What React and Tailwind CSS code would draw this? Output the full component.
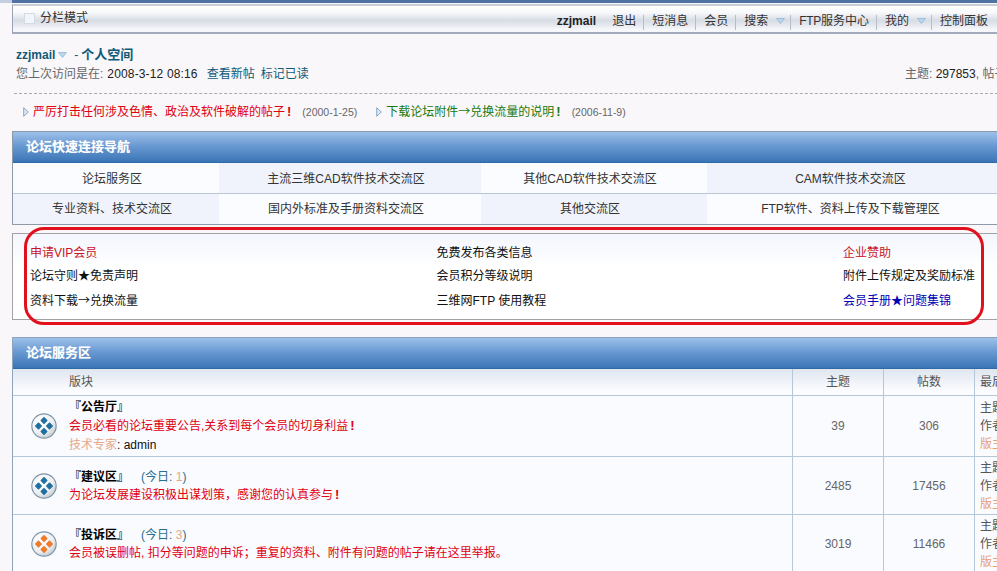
import React from "react";

const F = "font-['Liberation_Sans','Noto_Sans_CJK_SC',sans-serif]";

function Down({ className = "" }) {
  return (
    <svg width="9" height="6" viewBox="0 0 9 6" className={className}>
      <path d="M0.5 0.5 H8.5 L4.5 5.5 Z" fill="#bcd6ec" stroke="#8fb6d8" strokeWidth="0.8" />
    </svg>
  );
}

function Tri() {
  return (
    <svg width="6" height="10" viewBox="0 0 6 10" className="shrink-0">
      <path d="M0.7 0.7 L5.3 5 L0.7 9.3 Z" fill="#dce8f4" stroke="#88a8c8" strokeWidth="1" />
    </svg>
  );
}

function Sym({ children }) {
  return <span className="font-['Noto_Sans_CJK_SC',sans-serif] leading-[0px]">{children}</span>;
}

function Board({ id, color }) {
  const ds = [[12.5, 7.2], [17.8, 12.5], [12.5, 17.8], [7.2, 12.5]];
  return (
    <svg width="26" height="26" viewBox="0 0 25 25" className="shrink-0">
      <defs>
        <radialGradient id={id} cx="0.35" cy="0.3" r="0.8">
          <stop offset="0" stopColor="#ffffff" />
          <stop offset="0.65" stopColor="#eceef0" />
          <stop offset="1" stopColor="#b9c0c6" />
        </radialGradient>
      </defs>
      <circle cx="12.5" cy="12.5" r="11.7" fill={`url(#${id})`} stroke="#7c93a8" strokeWidth="1.1" />
      {ds.map(([x, y], i) => (
        <rect key={i} x={x - 2.6} y={y - 2.6} width="5.2" height="5.2" rx="0.8" fill={color} transform={`rotate(45 ${x} ${y})`} />
      ))}
    </svg>
  );
}

function Bang() {
  return <b className="ml-[2px] font-bold text-[13px] leading-[0px]">!</b>;
}

function Head({ children }) {
  return (
    <div className="h-[31px] pl-[13px] flex items-center text-[13px] font-bold text-white bg-[linear-gradient(to_bottom,#9dc0ea,#6a9ad2_45%,#3b75b6)] border-b border-b-[#2f6aa6] [text-shadow:0_0_1px_#ffffff55]">
      {children}
    </div>
  );
}

function Cell({ children, dark, w, extra = "" }) {
  return (
    <div className={`${w} ${extra} ${dark ? "bg-[#f0f3fb]" : "bg-[#fbfcff]"} pr-[8px] flex items-center justify-center text-[#333]`}>
      {children}
    </div>
  );
}

function NavItem({ children, arrow, last }) {
  return (
    <div className="relative h-full flex items-center pt-[3px]">
      <span className="px-[8px] flex items-center text-[#333] whitespace-nowrap">
        {children}
        {arrow && <Down className="ml-[8px] mr-[-2px]" />}
      </span>
      {!last && <span className="absolute right-0 top-[9px] h-[15px] w-px bg-[#b6bcc8]" />}
    </div>
  );
}

function Forum({ id, color, height, lead, children, topics, posts }) {
  return (
    <div className={`flex ${height} border-t border-t-[#b4c8da]`}>
      <div className={`w-[779px] shrink-0 ${lead} flex items-center`}>
        <div className="w-[56px] shrink-0 flex justify-end pr-[12px]">
          <Board id={id} color={color} />
        </div>
        <div className="flex-1 whitespace-nowrap">{children}</div>
      </div>
      <div className="w-[91px] shrink-0 border-l border-l-[#b4c8da] flex items-center justify-center text-[#666]">{topics}</div>
      <div className="w-[91px] shrink-0 border-l border-l-[#b4c8da] flex items-center justify-center text-[#666]">{posts}</div>
      <div className="flex-1 min-w-0 overflow-hidden border-l border-l-[#b4c8da] pl-[5px] leading-[18px] flex flex-col justify-center text-[#555] whitespace-nowrap">
        <div>主题</div>
        <div>作者</div>
        <div className="text-[#e8a070]">版主</div>
      </div>
    </div>
  );
}

function Today({ n }) {
  return (
    <span className="ml-[12px] font-normal text-[#2a6f90]">
      (今日: <span className="text-[#e0a888]">{n}</span>)
    </span>
  );
}

export default function App() {
  return (
    <div className={`${F} relative w-[997px] h-[571px] overflow-hidden bg-[#f9f7f9] text-[12px] leading-[16px] text-[#333]`}>
      <div className="w-[1003px]">
        <div className="h-[3px] bg-[linear-gradient(to_right,#c3cfe0_12px,#4f72a3_12px)]" />
        <div className="ml-[12px] mt-px h-[30px] border-l border-l-[#9aa3b4] border-t-2 border-t-[#c9cdd8] border-b-2 border-b-[#a3abbd] bg-[linear-gradient(to_bottom,#ffffff_0%,#f8f9fb_25%,#d8dde5_55%,#e2e5ec_70%,#f6f7fa_90%)] flex items-center pr-[7px]">
          <div className="w-[11px] h-[11px] ml-[11px] mb-[2px] border border-[#d6dae2] bg-[#f2f5fa]" />
          <span className="ml-[5px] mb-[2px] text-[#333]">分栏模式</span>
          <div className="ml-auto h-full flex items-center">
            <NavItem last><b className="text-[#222]">zzjmail</b></NavItem>
            <NavItem>退出</NavItem>
            <NavItem>短消息</NavItem>
            <NavItem>会员</NavItem>
            <NavItem arrow>搜索</NavItem>
            <NavItem><span className="tracking-[-0.3px]">FTP</span>服务中心</NavItem>
            <NavItem arrow>我的</NavItem>
            <NavItem last>控制面板</NavItem>
          </div>
        </div>

        <div className="ml-[16px] mt-[13px] h-[16px] flex items-center text-[#0f5a78] font-bold">
          zzjmail
          <Down className="ml-[3px]" />
          <span className="ml-[7px] font-normal">-</span>
          <span className="ml-[3px] text-[13px]">个人空间</span>
        </div>
        <div className="ml-[16px] mt-[3px] h-[16px] flex items-center whitespace-nowrap">
          <div className="w-[889px] shrink-0 flex items-center">
            <span className="text-[#666]">您上次访问是在: </span>
            <span className="ml-[4px] text-[#222] tracking-[0.15px]">2008-3-12 08:16</span>
            <span className="ml-[9px] text-[#0f5a78]">查看新帖</span>
            <span className="ml-[6px] text-[#0f5a78]">标记已读</span>
          </div>
          <span className="text-[#666]">主题: <span className="text-[#222]">297853</span>, 帖子</span>
        </div>

        <div className="ml-[14px] mt-[11px] border-t border-dashed border-t-[#aaaaaa]" />

        <div className="h-[36px] pl-[23px] flex items-center whitespace-nowrap">
          <Tri />
          <span className="ml-[4px] text-[#e00010]">严厉打击任何涉及色情、政治及软件破解的帖子<Bang /></span>
          <span className="ml-[11px] text-[10.5px] text-[#666]">(2000-1-25)</span>
          <span className="ml-[19px]"><Tri /></span>
          <span className="ml-[4px] text-[#1a7a10]">下载论坛附件<Sym>→</Sym>兑换流量的说明<Bang /></span>
          <span className="ml-[11px] text-[10.5px] text-[#666]">(2006-11-9)</span>
        </div>

        <div className="ml-[12px] mt-px border border-[#8e9aa8]">
          <Head>论坛快速连接导航</Head>
          <div className="flex h-[31px] border-b border-b-[#b9c6d4]">
            <Cell w="w-[206px]" extra="pt-[2px]">论坛服务区</Cell>
            <Cell w="w-[262px]" extra="pt-[2px]" dark>主流三维CAD软件技术交流区</Cell>
            <Cell w="w-[226px]" extra="pt-[2px]">其他CAD软件技术交流区</Cell>
            <Cell w="flex-1" extra="pt-[2px]" dark>CAM软件技术交流区</Cell>
          </div>
          <div className="flex h-[30px]">
            <Cell w="w-[206px]" dark>专业资料、技术交流区</Cell>
            <Cell w="w-[262px]">国内外标准及手册资料交流区</Cell>
            <Cell w="w-[226px]" dark>其他交流区</Cell>
            <Cell w="flex-1">FTP软件、资料上传及下载管理区</Cell>
          </div>
        </div>

        <div className="ml-[12px] mt-[8px] h-[87px] border border-[#a2a2a6] bg-[linear-gradient(to_bottom,#f3f6fd,#ffffff_40%)] pl-[17px] pt-[7px] grid grid-cols-[406.5px_406.5px_1fr] grid-rows-[24px_24px_24px] items-center leading-[16px] text-[#111]">
          <span className="text-[#c8141e]">申请VIP会员</span>
          <span>免费发布各类信息</span>
          <span className="text-[#c8141e]">企业赞助</span>
          <span className="-mt-[2px]">论坛守则<Sym>★</Sym>免责声明</span>
          <span className="-mt-[2px]">会员积分等级说明</span>
          <span className="-mt-[2px]">附件上传规定及奖励标准</span>
          <span>资料下载<Sym>→</Sym>兑换流量</span>
          <span>三维网FTP 使用教程</span>
          <span className="text-[#0000b4]">会员手册<Sym>★</Sym>问题集锦</span>
        </div>

        <div className="ml-[12px] mt-[17px] border border-[#8ea4bc] bg-[#f9fbff]">
          <Head>论坛服务区</Head>
          <div className="flex h-[26px] bg-[linear-gradient(to_bottom,#dfe6ef,#fbfcff_85%)] text-[#555] whitespace-nowrap">
            <div className="w-[779px] shrink-0 pl-[56px] flex items-center">版块</div>
            <div className="w-[91px] shrink-0 border-l border-l-[#b4c8da] flex items-center justify-center">主题</div>
            <div className="w-[91px] shrink-0 border-l border-l-[#b4c8da] flex items-center justify-center">帖数</div>
            <div className="flex-1 min-w-0 overflow-hidden border-l border-l-[#b4c8da] pl-[5px] flex items-center">最后</div>
          </div>
          <Forum id="g1" color="#1f6fa0" height="h-[61px]" lead="leading-[19px]" topics="39" posts="306">
            <div className="font-bold text-[#000]">『公告厅』</div>
            <div className="text-[#e00010]">会员必看的论坛重要公告,关系到每个会员的切身利益<Bang /></div>
            <div className="text-[#e8a888]">技术专家<span className="text-[#111]">: admin</span></div>
          </Forum>
          <Forum id="g2" color="#1f6fa0" height="h-[58px]" lead="leading-[18px]" topics="2485" posts="17456">
            <div className="font-bold text-[#000]">『建议区』<Today n="1" /></div>
            <div className="text-[#e00010]">为论坛发展建设积极出谋划策，感谢您的认真参与<Bang /></div>
          </Forum>
          <Forum id="g3" color="#ee7a2c" height="h-[58px]" lead="leading-[18px]" topics="3019" posts="11466">
            <div className="font-bold text-[#000]">『投诉区』<Today n="3" /></div>
            <div className="text-[#e00010]">会员被误删帖, 扣分等问题的申诉；重复的资料、附件有问题的帖子请在这里举报。</div>
          </Forum>
        </div>
      </div>

      <div className="absolute left-[24px] top-[227px] w-[960px] h-[98px] rounded-[20px] border-[3px] border-[#e2101c]" />
    </div>
  );
}
